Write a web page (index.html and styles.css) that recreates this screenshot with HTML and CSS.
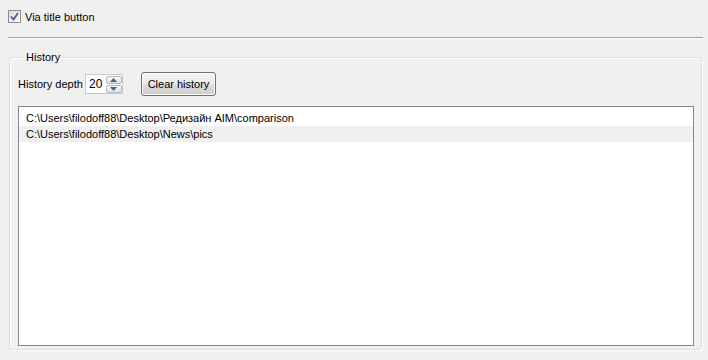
FILE: index.html
```html
<!DOCTYPE html>
<html lang="en">
<head>
  <meta charset="UTF-8" />
  <title>History settings</title>
  <link rel="stylesheet" href="styles.css">
</head>
<body>

<div class="panel">
  <label class="check-row">
    <span class="checkbox">
      <svg width="9" height="9" viewBox="0 0 9 9"><path d="M1 4.5 L3.5 7.5 L8 1" fill="none" stroke="#4a5f97" stroke-width="1.8"/></svg>
    </span>
    Via title button
  </label>

  <div class="separator"></div>

  <fieldset class="group">
    <legend>History</legend>
    <div class="depth-row">
      <span class="depth-label">History depth</span>
      <div class="spinner">
        <span class="spin-value">20</span>
        <div class="spin-buttons">
          <div class="spin-btn">
            <svg width="7" height="4" viewBox="0 0 7 4"><path d="M0 4 L3.5 0 L7 4 Z" fill="#4d6185"/></svg>
          </div>
          <div class="spin-btn">
            <svg width="7" height="4" viewBox="0 0 7 4"><path d="M0 0 L3.5 4 L7 0 Z" fill="#4d6185"/></svg>
          </div>
        </div>
      </div>
      <button class="clear-btn">Clear history</button>
    </div>

    <div class="history-list">
      <div class="history-entry">C:\Users\filodoff88\Desktop\Редизайн AIM\comparison</div>
      <div class="history-entry selected">C:\Users\filodoff88\Desktop\News\pics</div>
    </div>
  </fieldset>
</div>

</body>
</html>
```

FILE: styles.css
```css
body {
  margin: 0;
  background: #f0f0f0;
  font-family: "Liberation Sans", Arial, sans-serif;
  font-size: 11px;
  color: #000;
}
.panel {
  width: 708px;
  height: 360px;
  overflow: hidden;
}
.check-row {
  display: flex;
  align-items: center;
  gap: 4px;
  height: 13px;
  margin: 10px 0 0 8px;
}
.checkbox {
  width: 11px;
  height: 11px;
  border: 1px solid #8e8f8f;
  background: linear-gradient(135deg, #dcdcdc, #fafafa);
  display: flex;
  align-items: center;
  justify-content: center;
}
.separator {
  margin: 14px 5px 0 8px;
  border-top: 1px solid #a0a0a0;
  border-bottom: 1px solid #fff;
}
.group {
  margin: 12px 6px 0 9px;
  padding: 8px 7px 8px 8px;
  border: 1px solid #d5dfe5;
  border-radius: 3px;
  box-shadow: inset 1px 1px 0 #fff, 1px 1px 0 #fff;
  box-sizing: border-box;
  height: 299px;
}
.group legend {
  padding: 0 2px;
  margin-left: 6px;
  line-height: 13px;
}
.depth-row {
  display: flex;
  align-items: center;
  height: 24px;
}
.depth-label {
  width: 67px;
}
.spinner {
  display: flex;
  align-items: center;
  width: 35px;
  height: 18px;
  border: 1px solid #c4cad0;
  background: #fff;
  padding-left: 1px;
}
.spin-value {
  width: 17px;
  padding-left: 2px;
  font-size: 12px;
}
.spin-buttons {
  display: flex;
  flex-direction: column;
  gap: 1px;
  width: 17px;
  height: 17px;
}
.spin-btn {
  flex: 1;
  border: 1px solid #b5bcc5;
  border-radius: 2px;
  background: linear-gradient(#f6f7f9, #dde2e8);
  display: flex;
  align-items: center;
  justify-content: center;
}
.clear-btn {
  margin-left: 18px;
  width: 75px;
  height: 24px;
  font: inherit;
  font-size: 11px;
  border: 1px solid #707070;
  border-radius: 3px;
  background: linear-gradient(#f2f2f2 0%, #ebebeb 50%, #dddddd 51%, #cfcfcf 100%);
  box-shadow: inset 0 0 0 1px #fcfcfc;
  padding: 0;
}
.history-list {
  margin-top: 10px;
  height: 240px;
  box-sizing: border-box;
  border: 1px solid #828790;
  background: #fff;
  padding-top: 3px;
}
.history-entry {
  height: 16px;
  line-height: 16px;
  padding-left: 7px;
}
.history-entry.selected {
  background: #f0f0f0;
}
```
